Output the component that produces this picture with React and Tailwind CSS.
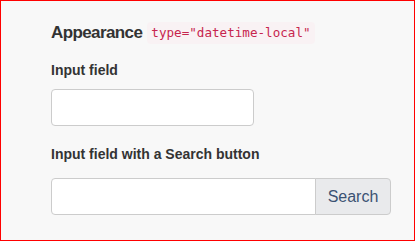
export default function App() {
  return (
    <div className="w-[415px] h-[241px] border border-[#ff0000] bg-[#f8f8f8] pl-[50px] pt-[21px] font-['Liberation_Sans',Arial,sans-serif] text-[#333]">
      <div className="flex items-center h-[22px]">
        <span className="text-[17px] font-bold leading-[22px] tracking-[-0.6px]">Appearance</span>
        <code className="ml-[5px] px-[4px] h-[22px] leading-[22px] rounded-[4px] bg-[#f9f2f4] text-[#c7254e] text-[12.6px] font-['DejaVu_Sans_Mono',monospace]">type="datetime-local"</code>
      </div>
      <div className="mt-[18px] text-[14px] font-bold leading-[16px]">Input field</div>
      <div className="mt-[11px] w-[203px] h-[37px] bg-white border border-[#ccc] rounded-[4px]"></div>
      <div className="mt-[20px] text-[14px] font-bold leading-[16px]">Input field with a Search button</div>
      <div className="mt-[16px] flex w-[340px] h-[37px]">
        <div className="flex-1 bg-white border border-[#ccc] rounded-l-[4px]"></div>
        <div className="w-[76px] -ml-px flex items-center justify-center bg-[#e9eaec] border border-[#ccc] rounded-r-[4px] text-[16px] text-[#3b5273]">Search</div>
      </div>
    </div>
  );
}
